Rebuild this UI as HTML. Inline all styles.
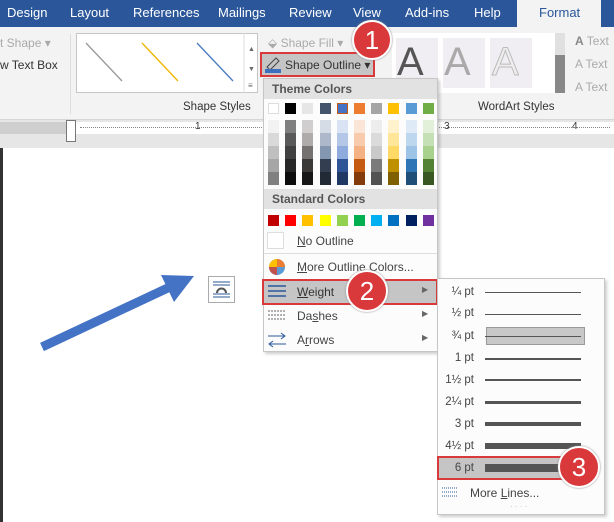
<!DOCTYPE html>
<html><head><meta charset="utf-8"><style>
*{margin:0;padding:0;box-sizing:border-box}
body{width:614px;height:522px;overflow:hidden;position:relative;background:#fff;font-family:"Liberation Sans","DejaVu Sans",sans-serif;}
.a{position:absolute}
.tab{position:absolute;top:5px;color:#fff;font-size:13px}
.t{font-size:12px;color:#333;position:absolute;white-space:nowrap}
.sw{position:absolute;width:11px;height:11px}
.ln{position:absolute;left:485px;width:96px;background:#555}
.pt{position:absolute;right:140px;font-size:11.5px;color:#444;text-align:right}
.circ{position:absolute;border-radius:50%;background:#d9393b;border:2px solid #fff;color:#fff;font-size:26px;text-align:center;box-shadow:0 0 2px #888}
</style></head><body>
<div class="a" style="left:0;top:0;width:614px;height:27px;background:#2b579a"></div>
<div class="tab" style="left:7px">Design</div>
<div class="tab" style="left:70px">Layout</div>
<div class="tab" style="left:133px">References</div>
<div class="tab" style="left:218px">Mailings</div>
<div class="tab" style="left:289px">Review</div>
<div class="tab" style="left:353px">View</div>
<div class="tab" style="left:405px">Add-ins</div>
<div class="tab" style="left:474px">Help</div>
<div class="a" style="left:517px;top:0;width:84px;height:27px;background:#f3f3f3"></div>
<div class="tab" style="left:539px;color:#2b579a">Format</div>
<div class="a" style="left:0;top:27px;width:614px;height:93px;background:#f3f3f3;border-bottom:1px solid #d6d6d6"></div>
<div class="t" style="left:0;top:36px;color:#aaa">t Shape ▾</div>
<div class="t" style="left:0;top:58px">w Text Box</div>
<div class="a" style="left:70px;top:34px;width:1px;height:80px;background:#ddd"></div>
<div class="a" style="left:76px;top:33px;width:182px;height:60px;background:#fff;border:1px solid #c6c6c6"></div>
<svg class="a" style="left:76px;top:33px" width="182" height="60">
<line x1="10" y1="10" x2="46" y2="48" stroke="#999" stroke-width="1.3"/>
<line x1="66" y1="10" x2="102" y2="48" stroke="#f0b400" stroke-width="1.3"/>
<line x1="121" y1="10" x2="157" y2="48" stroke="#4a7cc0" stroke-width="1.3"/>
<line x1="168" y1="0" x2="168" y2="60" stroke="#ddd"/>
<text x="172" y="18" font-size="7" fill="#666">▲</text><text x="172" y="38" font-size="7" fill="#666">▼</text><text x="172" y="55" font-size="8" fill="#666">≡</text>
</svg>
<div class="t" style="left:183px;top:101px;font-size:11.5px">Shape Styles</div>
<div class="t" style="left:268px;top:36px;color:#aaa">⬙ Shape Fill ▾</div>
<div class="a" style="left:260px;top:52px;width:115px;height:25px;background:#c5c5c5;border:2px solid #d9393b"></div>
<svg class="a" style="left:264px;top:55px" width="18" height="18"><path d="M3 12 L12 3 L15 6 L6 15 Z" fill="none" stroke="#444"/><rect x="1" y="14" width="16" height="4" fill="#3c6fbe"/></svg>
<div class="t" style="left:285px;top:58px;font-size:12px">Shape Outline ▾</div>
<div class="a" style="left:392px;top:33px;width:173px;height:60px;background:#fff"></div>
<div class="a" style="left:396px;top:38px;width:42px;height:50px;background:#f0eef3"></div>
<div class="a" style="left:443px;top:38px;width:42px;height:50px;background:#f0eef3"></div>
<div class="a" style="left:490px;top:38px;width:42px;height:50px;background:#f0eef3"></div>
<div class="a" style="left:397px;top:40px;font-size:40px;color:#555">A</div>
<div class="a" style="left:444px;top:40px;font-size:40px;color:#aaa">A</div>
<div class="a" style="left:492px;top:40px;font-size:40px;color:#eee;-webkit-text-stroke:1px #bbb">A</div>
<div class="a" style="left:555px;top:33px;width:10px;height:60px;background:#e0e0e0"></div>
<div class="a" style="left:555px;top:55px;width:10px;height:38px;background:#888"></div>
<div class="t" style="left:575px;top:34px;color:#aaa"><b style="color:#888">A</b> Text</div>
<div class="t" style="left:575px;top:57px;color:#aaa">A Text</div>
<div class="t" style="left:575px;top:80px;color:#aaa">A Text</div>
<div class="t" style="left:478px;top:101px;font-size:11.5px">WordArt Styles</div>
<div class="a" style="left:0;top:120px;width:614px;height:28px;background:#e6e6e6"></div>
<div class="a" style="left:0;top:122px;width:70px;height:12px;background:#cfcfcf"></div>
<div class="a" style="left:70px;top:122px;width:544px;height:12px;background:#fff"></div>
<div class="a" style="left:66px;top:120px;width:10px;height:22px;border:1px solid #777;background:#fff"></div>
<div class="t" style="left:195px;top:121px;font-size:10px">1</div>
<div class="t" style="left:444px;top:121px;font-size:10px">3</div>
<div class="t" style="left:572px;top:121px;font-size:10px">4</div>
<div class="a" style="left:80px;top:127px;width:530px;height:1px;border-top:1px dotted #888"></div>
<div class="a" style="left:0;top:148px;width:614px;height:374px;background:#fff"></div>
<div class="a" style="left:0;top:148px;width:3px;height:374px;background:#333"></div>
<svg class="a" style="left:0;top:240px" width="260" height="120">
<line x1="42" y1="107" x2="172" y2="46" stroke="#4472c4" stroke-width="9"/>
<polygon points="161,35 194,36 174,62" fill="#4472c4"/>
</svg>
<div class="a" style="left:208px;top:276px;width:27px;height:27px;border:1px solid #aaa;background:#fff"></div>
<svg class="a" style="left:208px;top:276px" width="27" height="27"><g stroke="#2b579a"><line x1="5" y1="6" x2="22" y2="6"/><line x1="5" y1="9" x2="22" y2="9"/><line x1="5" y1="18" x2="22" y2="18"/><line x1="5" y1="21" x2="22" y2="21"/></g><path d="M9 17 A4.5 4.5 0 0 1 18 17" stroke="#555" stroke-width="2" fill="none"/></svg>
<div class="a" style="left:263px;top:78px;width:175px;height:274px;background:#fcfcfc;border:1px solid #c6c6c6;box-shadow:2px 2px 3px rgba(0,0,0,.2)"></div>
<div class="a" style="left:264px;top:79px;width:173px;height:20px;background:#e2e2e2"></div>
<div class="t" style="left:272px;top:82px;font-weight:bold;color:#555">Theme Colors</div>
<div class="a" style="left:264px;top:189px;width:173px;height:20px;background:#e2e2e2"></div>
<div class="t" style="left:272px;top:192px;font-weight:bold;color:#555">Standard Colors</div>
<div id="sw"></div>
<div class="a" style="left:267px;top:232px;width:17px;height:17px;border:1px solid #ddd;background:#fff"></div>
<div class="t" style="left:297px;top:234px;color:#444"><u>N</u>o Outline</div>
<div class="a" style="left:264px;top:253px;width:173px;height:1px;background:#ddd"></div>
<svg class="a" style="left:268px;top:258px" width="18" height="18"><circle cx="9" cy="9" r="8" fill="#5b9bd5"/><path d="M9 9 L9 1 A8 8 0 0 1 17 9Z" fill="#ed7d31"/><path d="M9 9 L1 9 A8 8 0 0 1 9 1Z" fill="#ffc000"/><path d="M9 9 L9 17 A8 8 0 0 1 1 9Z" fill="#c0504d"/></svg>
<div class="t" style="left:297px;top:260px;color:#444"><u>M</u>ore Outline Colors...</div>
<div class="a" style="left:262px;top:279px;width:176px;height:26px;background:#c5c5c5;border:2px solid #d9393b"></div>
<svg class="a" style="left:268px;top:284px" width="18" height="14"><g stroke="#2b579a" stroke-width="1.5"><line x1="0" y1="2" x2="18" y2="2"/><line x1="0" y1="7" x2="18" y2="7"/><line x1="0" y1="12" x2="18" y2="12"/></g></svg>
<div class="t" style="left:297px;top:285px;color:#333"><u>W</u>eight</div>
<div class="t" style="left:422px;top:285px;font-size:8px;color:#666">▶</div>
<svg class="a" style="left:268px;top:310px" width="18" height="12"><g stroke="#666" stroke-dasharray="2 1"><line x1="0" y1="1" x2="18" y2="1"/><line x1="0" y1="5" x2="18" y2="5"/><line x1="0" y1="9" x2="18" y2="9"/></g></svg>
<div class="t" style="left:297px;top:309px;color:#444">Da<u>s</u>hes</div>
<div class="t" style="left:422px;top:309px;font-size:8px;color:#666">▶</div>
<svg class="a" style="left:268px;top:332px" width="18" height="16"><g stroke="#2b579a" fill="none"><path d="M0 4 H17 M13 1 L17 4 L13 7"/><path d="M18 12 H1 M5 9 L1 12 L5 15"/></g></svg>
<div class="t" style="left:297px;top:333px;color:#444">A<u>r</u>rows</div>
<div class="t" style="left:422px;top:333px;font-size:8px;color:#666">▶</div>
<div class="a" style="left:437px;top:278px;width:168px;height:237px;background:#fcfcfc;border:1px solid #c6c6c6;box-shadow:2px 2px 3px rgba(0,0,0,.2)"></div>
<div class="a" style="left:486px;top:327px;width:99px;height:18px;background:#c8c8c8;border:1px solid #999"></div>
<div class="a" style="left:437px;top:456px;width:144px;height:24px;background:#c5c5c5;border:2px solid #d9393b"></div>
<div class="pt" style="top:286px">¼ pt</div><div class="ln" style="top:292px;height:1px"></div>
<div class="pt" style="top:307px">½ pt</div><div class="ln" style="top:314px;height:1px"></div>
<div class="pt" style="top:330px">¾ pt</div><div class="ln" style="top:336px;height:1px"></div>
<div class="pt" style="top:352px">1 pt</div><div class="ln" style="top:358px;height:2px"></div>
<div class="pt" style="top:374px">1½ pt</div><div class="ln" style="top:379px;height:2px"></div>
<div class="pt" style="top:396px">2¼ pt</div><div class="ln" style="top:401px;height:3px"></div>
<div class="pt" style="top:418px">3 pt</div><div class="ln" style="top:422px;height:4px"></div>
<div class="pt" style="top:440px">4½ pt</div><div class="ln" style="top:443px;height:6px"></div>
<div class="pt" style="top:462px">6 pt</div><div class="ln" style="top:464px;height:8px"></div>
<svg class="a" style="left:442px;top:487px" width="16" height="10"><g stroke="#2b579a" stroke-dasharray="1 1"><line x1="0" y1="1" x2="16" y2="1"/><line x1="0" y1="5" x2="16" y2="5"/><line x1="0" y1="9" x2="16" y2="9"/></g></svg>
<div class="t" style="left:470px;top:486px;color:#444">More <u>L</u>ines...</div>
<div class="t" style="left:510px;top:502px;color:#bbb;font-size:8px">· · · ·</div>
<div class="circ" style="left:352px;top:20px;width:40px;height:40px;line-height:36px">1</div>
<div class="circ" style="left:346px;top:270px;width:42px;height:42px;line-height:38px">2</div>
<div class="circ" style="left:558px;top:446px;width:42px;height:42px;line-height:38px">3</div>
<script>
var tc=["ffffff","000000","e7e6e6","44546a","4472c4","ed7d31","a5a5a5","ffc000","5b9bd5","70ad47"];
var g=[["f2f2f2","d9d9d9","bfbfbf","a6a6a6","808080"],["7f7f7f","595959","404040","262626","0d0d0d"],["d0cece","afabab","757171","3b3838","181717"],["d6dce5","adb9ca","8497b0","333f50","222a35"],["dae3f3","b4c7e7","8faadc","2f5597","203864"],["fbe5d6","f8cbad","f4b183","c55a11","843c0c"],["ededed","dbdbdb","c9c9c9","7b7b7b","525252"],["fff2cc","ffe699","ffd966","bf9000","7f6000"],["deebf7","bdd7ee","9dc3e6","2e75b6","1f4e79"],["e2f0d9","c5e0b4","a9d18e","548235","385723"]];
var st=["c00000","ff0000","ffc000","ffff00","92d050","00b050","00b0f0","0070c0","002060","7030a0"];
var h="";
for(var i=0;i<10;i++){var x=268+i*17.2;
h+='<div class="sw" style="left:'+x+'px;top:103px;background:#'+tc[i]+';border:1px solid '+(i==4?'#c55a11':(i==0?'#ddd':'#'+tc[i]))+'"></div>';
for(var j=0;j<5;j++)h+='<div class="sw" style="left:'+x+'px;top:'+(120+j*13)+'px;height:13px;background:#'+g[i][j]+'"></div>';
h+='<div class="sw" style="left:'+x+'px;top:215px;background:#'+st[i]+'"></div>';}
document.getElementById("sw").outerHTML=h;
</script>
</body></html>
